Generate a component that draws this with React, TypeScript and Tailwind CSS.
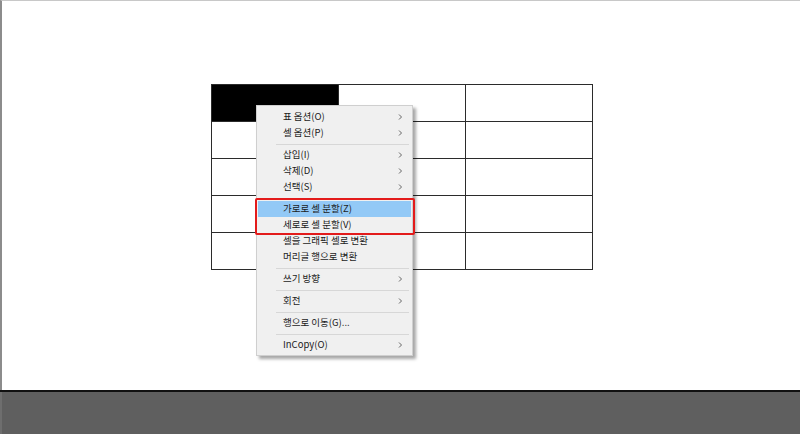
type Item = { label: string; sub?: boolean; active?: boolean } | "sep";

const menu: Item[] = [
  { label: "표 옵션(O)", sub: true },
  { label: "셀 옵션(P)", sub: true },
  "sep",
  { label: "삽입(I)", sub: true },
  { label: "삭제(D)", sub: true },
  { label: "선택(S)", sub: true },
  "sep",
  { label: "가로로 셀 분할(Z)", active: true },
  { label: "세로로 셀 분할(V)" },
  { label: "셀을 그래픽 셀로 변환" },
  { label: "머리글 행으로 변환" },
  "sep",
  { label: "쓰기 방향", sub: true },
  "sep",
  { label: "회전", sub: true },
  "sep",
  { label: "행으로 이동(G)..." },
  "sep",
  { label: "InCopy(O)", sub: true },
];

const Chevron = () => (
  <svg width="5" height="8" viewBox="0 0 5 8" className="text-[#666]">
    <path d="M1 1.5 L3.5 4 L1 6.5" fill="none" stroke="currentColor" strokeWidth="1" />
  </svg>
);

const ContextMenu = () => (
  <div className="absolute left-[254px] top-[104px] w-[157px] h-[251px] bg-[#f0f0f0] border border-[#cfcfcf] shadow-[3px_3px_3px_rgba(0,0,0,0.35)] pt-[3px] font-['Noto_Sans_CJK_KR','Noto_Sans',sans-serif] text-[9.5px] text-[#1b1b1b]">
    {menu.map((it, i) =>
      it === "sep" ? (
        <div key={i} className="h-[6px] flex items-center pl-[19px] pr-[3px]">
          <div className="h-px w-full bg-[#d7d7d7]" />
        </div>
      ) : (
        <div
          key={i}
          className={`h-[16px] mx-px flex items-center pl-[25px] pr-[8px] ${it.active ? "bg-[#93c9f6]" : ""}`}
        >
          <span className="flex-1 leading-none">{it.label}</span>
          {it.sub && <Chevron />}
        </div>
      )
    )}
    {/* red highlight frame */}
    <div className="absolute left-[-2px] top-[92px] w-[160px] h-[37px] border-2 border-[#e31b1b] rounded-[2px]" />
  </div>
);

const App = () => {
  return (
    <div className="w-[800px] h-[434px] flex flex-col overflow-hidden">
      {/* document page */}
      <div className="relative h-[390px] bg-white border-t border-[#c8c8c8] border-l-2 border-l-[#8c8c8c] pl-[209px] pt-[83px]">
        <div className="grid grid-cols-[127px_127px_127px] w-[382px] border-t border-l border-[#2b2b2b]">
          {Array.from({ length: 15 }).map((_, i) => (
            <div
              key={i}
              className={`h-[37px] border-r border-b border-[#2b2b2b] ${i === 0 ? "bg-black" : ""}`}
            />
          ))}
        </div>
        <ContextMenu />
      </div>
      <div className="h-[2px] bg-[#111]" />
      <div className="flex-1 bg-[#5f5f5f] border-l-2 border-l-[#6e6e6e]" />
    </div>
  );
};

export default App;
